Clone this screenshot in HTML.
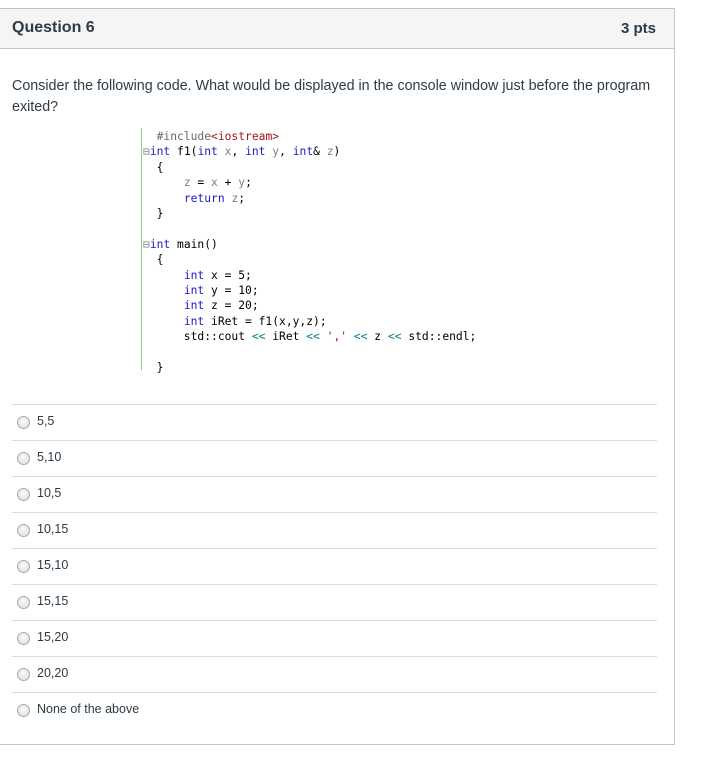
<!DOCTYPE html>
<html><head><meta charset="utf-8"><style>
body{margin:0;background:#fff;width:728px;height:766px;overflow:hidden;font-family:"Liberation Sans",sans-serif;}
.box{position:absolute;left:-1px;top:8px;width:674px;height:735px;border:1px solid #c4c4c4;}
.hdr{position:absolute;left:0;top:0;width:674px;height:39px;background:#f5f5f5;border-bottom:1px solid #c4c4c4;}
.hdr .t{position:absolute;left:12px;top:10px;font-size:16px;font-weight:bold;color:#2d3b45;}
.hdr .p{position:absolute;right:18px;top:11px;font-size:15px;font-weight:bold;color:#2d3b45;}
.q{position:absolute;left:12px;top:76px;width:660px;font-size:14.3px;line-height:21px;color:#2d3b45;}
.code{position:absolute;left:143px;top:129px;font-family:"DejaVu Sans Mono","Liberation Mono",monospace;font-size:11.3px;line-height:15.4px;white-space:pre;color:#000;}
.bar{position:absolute;left:141px;top:128px;width:1px;height:242px;background:#8ad08a;}
.k{color:#1a1acc}.g{color:#808080}.s{color:#a31515}.o{color:#008080}.c{color:#6a6a6a}
.ans{position:absolute;left:12px;width:645px;height:36px;border-top:1px solid #dcdcdc;font-size:12.5px;color:#2d3b45;}
.ans i{position:absolute;left:5px;top:11px;width:11px;height:11px;border-radius:50%;border:1px solid #aaa;background:radial-gradient(circle at 50% 40%,#fafafa,#ddd);}
.ans span{position:absolute;left:25px;top:9px;}
</style></head><body>
<div class="box"><div class="hdr"><div class="t">Question 6</div><div class="p">3 pts</div></div></div>
<div class="q">Consider the following code. What would be displayed in the console window just before the program exited?</div>
<div class="bar"></div>
<div class="code">  <span class="c">#include</span><span class="s">&lt;iostream&gt;</span>
<span class="g">&#8863;</span><span class="k">int</span> f1(<span class="k">int</span> <span class="g">x</span>, <span class="k">int</span> <span class="g">y</span>, <span class="k">int</span>&amp; <span class="g">z</span>)
  {
      <span class="g">z</span> = <span class="g">x</span> + <span class="g">y</span>;
      <span class="k">return</span> <span class="g">z</span>;
  }

<span class="g">&#8863;</span><span class="k">int</span> main()
  {
      <span class="k">int</span> x = 5;
      <span class="k">int</span> y = 10;
      <span class="k">int</span> z = 20;
      <span class="k">int</span> iRet = f1(x,y,z);
      std::cout <span class="o">&lt;&lt;</span> iRet <span class="o">&lt;&lt;</span> <span class="s">','</span> <span class="o">&lt;&lt;</span> z <span class="o">&lt;&lt;</span> std::endl;

  }</div>
<div class="ans" style="top:404px"><i></i><span>5,5</span></div>
<div class="ans" style="top:440px"><i></i><span>5,10</span></div>
<div class="ans" style="top:476px"><i></i><span>10,5</span></div>
<div class="ans" style="top:512px"><i></i><span>10,15</span></div>
<div class="ans" style="top:548px"><i></i><span>15,10</span></div>
<div class="ans" style="top:584px"><i></i><span>15,15</span></div>
<div class="ans" style="top:620px"><i></i><span>15,20</span></div>
<div class="ans" style="top:656px"><i></i><span>20,20</span></div>
<div class="ans" style="top:692px"><i></i><span>None of the above</span></div>
</body></html>
